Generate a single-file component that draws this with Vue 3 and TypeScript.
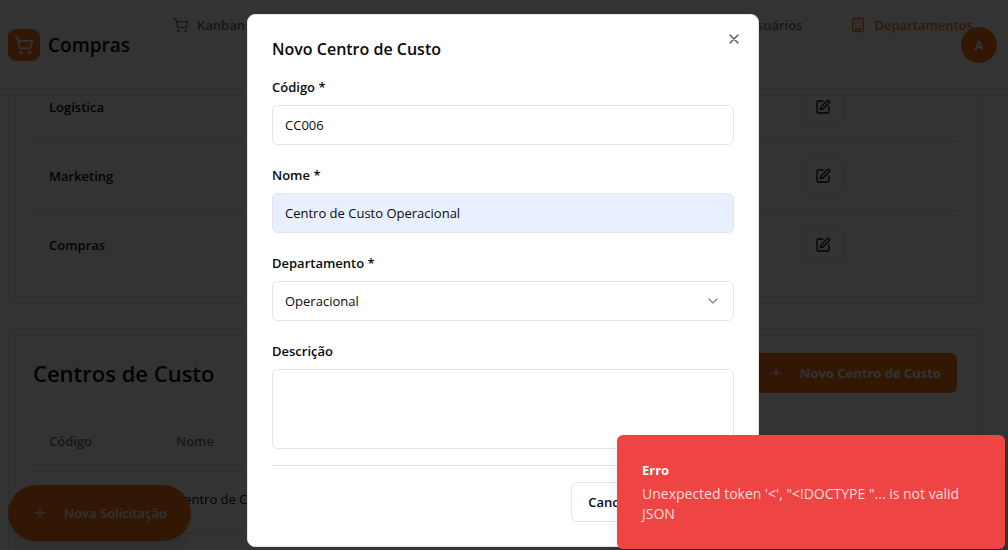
<script setup lang="ts">
import { ref } from 'vue'

interface CostCenter {
  code: string
  name: string
}

const departments = ref<string[]>(['Logística', 'Marketing', 'Compras'])
const costCenters = ref<CostCenter[]>([
  { code: '', name: 'Centro de Custo' },
  { code: '', name: '' },
])
const form = ref({ code: 'CC006', name: 'Centro de Custo Operacional', department: 'Operacional', description: '' })
</script>

<template>
  <div class="page">
    <header class="topbar">
      <a class="brand" href="#">
        <span class="brand-mark">
          <svg width="20" height="20" viewBox="0 0 24 24" class="icon"><circle cx="8" cy="21" r="1" /><circle cx="19" cy="21" r="1" /><path d="M2.05 2.05h2l2.66 12.42a2 2 0 0 0 2 1.58h9.78a2 2 0 0 0 1.95-1.57l1.65-7.43H5.12" /></svg>
        </span>
        <span class="brand-name">Compras</span>
      </a>
      <nav class="nav">
        <a class="nav-link" href="#">
          <svg width="16" height="16" viewBox="0 0 24 24" class="icon"><circle cx="8" cy="21" r="1" /><circle cx="19" cy="21" r="1" /><path d="M2.05 2.05h2l2.66 12.42a2 2 0 0 0 2 1.58h9.78a2 2 0 0 0 1.95-1.57l1.65-7.43H5.12" /></svg>
          Kanban
        </a>
        <a class="nav-link push" href="#">Usuários</a>
        <a class="nav-link active" href="#">
          <svg width="16" height="16" viewBox="0 0 24 24" class="icon"><rect x="4" y="2" width="16" height="20" rx="2" /><path d="M9 22v-4h6v4M8 6h.01M16 6h.01M12 6h.01M12 10h.01M12 14h.01M16 10h.01M16 14h.01M8 10h.01M8 14h.01" /></svg>
          Departamentos
        </a>
      </nav>
      <button class="avatar" type="button" aria-label="Conta">A</button>
    </header>

    <main class="content">
      <section class="card departments">
        <table class="table">
          <tbody>
            <tr v-for="d in departments" :key="d">
              <td class="strong">{{ d }}</td>
              <td class="actions">
                <button class="edit" type="button" :aria-label="'Editar ' + d">
                  <svg width="16" height="16" viewBox="0 0 24 24" class="icon"><path d="M12 3H5a2 2 0 0 0-2 2v14a2 2 0 0 0 2 2h14a2 2 0 0 0 2-2v-7" /><path d="M18.375 2.625a2.121 2.121 0 1 1 3 3L12 15l-4 1 1-4Z" /></svg>
                </button>
              </td>
            </tr>
          </tbody>
        </table>
      </section>

      <section class="card">
        <div class="card-head">
          <h2>Centros de Custo</h2>
          <button class="primary" type="button">
            <svg width="16" height="16" viewBox="0 0 24 24" class="icon"><path d="M5 12h14M12 5v14" /></svg>
            Novo Centro de Custo
          </button>
        </div>
        <table class="table">
          <thead>
            <tr><th class="code">Código</th><th>Nome</th></tr>
          </thead>
          <tbody>
            <tr v-for="(c, i) in costCenters" :key="i">
              <td>{{ c.code }}</td>
              <td>{{ c.name }}</td>
            </tr>
          </tbody>
        </table>
      </section>
    </main>

    <button class="primary fab" type="button">
      <svg width="16" height="16" viewBox="0 0 24 24" class="icon"><path d="M5 12h14M12 5v14" /></svg>
      Nova Solicitação
    </button>

    <div class="overlay">
      <form class="dialog" role="dialog" aria-labelledby="dialog-title" @submit.prevent>
        <h2 id="dialog-title">Novo Centro de Custo</h2>
        <button class="close" type="button" aria-label="Fechar">
          <svg width="16" height="16" viewBox="0 0 24 24" class="icon"><path d="M18 6 6 18M6 6l12 12" /></svg>
        </button>
        <div class="fields">
          <div class="field">
            <label for="code">Código *</label>
            <input id="code" v-model="form.code" type="text" />
          </div>
          <div class="field">
            <label for="name">Nome *</label>
            <input id="name" v-model="form.name" class="autofilled" type="text" />
          </div>
          <div class="field">
            <label for="department">Departamento *</label>
            <div class="select">
              <select id="department" v-model="form.department">
                <option>Operacional</option>
                <option v-for="d in departments" :key="d">{{ d }}</option>
              </select>
              <svg width="16" height="16" viewBox="0 0 24 24" class="icon chevron"><path d="m6 9 6 6 6-6" /></svg>
            </div>
          </div>
          <div class="field">
            <label for="description">Descrição</label>
            <textarea id="description" v-model="form.description"></textarea>
          </div>
        </div>
        <div class="dialog-actions">
          <button class="secondary" type="button">Cancelar</button>
          <button class="primary" type="submit">Criar</button>
        </div>
      </form>
    </div>

    <div class="toast" role="alert">
      <strong>Erro</strong>
      <p>Unexpected token '&lt;', "&lt;!DOCTYPE "... is not valid JSON</p>
    </div>
  </div>
</template>

<style>
body {
  margin: 0;
  background: #fff;
}
</style>

<style scoped>
.page,
.page * {
  box-sizing: border-box;
}
.page {
  position: relative;
  height: 100vh;
  overflow: hidden;
  font-family: 'Segoe UI', 'Open Sans', 'Noto Sans', sans-serif;
  font-size: 13px;
  line-height: 20px;
  color: #0a0a0a;
}
button,
input,
select,
textarea {
  font: inherit;
  color: inherit;
}
h2,
p {
  margin: 0;
}
a {
  text-decoration: none;
}
.icon {
  flex: none;
  fill: none;
  stroke: currentColor;
  stroke-width: 2;
  stroke-linecap: round;
  stroke-linejoin: round;
}

.topbar {
  position: relative;
  z-index: 1;
  display: flex;
  align-items: center;
  height: 96px;
  padding: 0 11px 6px 8px;
  background: #fff;
  border-bottom: 1px solid #e5e5e5;
}
.brand {
  display: flex;
  align-items: center;
  gap: 8px;
  width: 165px;
  color: inherit;
}
.brand-mark {
  display: grid;
  place-items: center;
  width: 32px;
  height: 32px;
  border-radius: 8px;
  background: #f97316;
  color: #fff;
}
.brand-name {
  font-size: 19px;
  line-height: 28px;
  font-weight: 600;
}
.nav {
  display: flex;
  flex: 1;
  align-self: flex-start;
  gap: 48px;
  padding-top: 15px;
}
.nav-link {
  display: flex;
  align-items: center;
  gap: 8px;
  font-weight: 600;
  color: #737373;
}
.nav-link.active {
  color: #f97316;
}
.push {
  margin-left: auto;
}
.avatar {
  width: 36px;
  height: 36px;
  margin-left: -12px;
  padding: 0;
  border: 0;
  border-radius: 50%;
  background: #f97316;
  color: #fff;
  font-weight: 700;
}

.content {
  display: flex;
  flex-direction: column;
  gap: 24px;
  margin-top: -24px;
  padding: 0 26px 0 8px;
}
.card {
  padding: 24px;
  border: 1px solid #e5e5e5;
  border-radius: 8px;
}
.departments {
  padding-top: 0;
}
.card-head {
  display: flex;
  align-items: center;
  justify-content: space-between;
  margin-bottom: 24px;
}
.card-head h2 {
  font-size: 22px;
  line-height: 32px;
  font-weight: 600;
}
.table {
  width: 100%;
  border-collapse: separate;
  border-spacing: 0;
}
.table th {
  height: 48px;
  padding: 0 16px;
  border-bottom: 1px solid #e5e5e5;
  text-align: left;
  font-weight: 600;
  color: #737373;
}
.table td {
  height: 69px;
  padding: 16px;
  border-bottom: 1px solid #e5e5e5;
}
.table tr:last-child td {
  height: 68px;
  border-bottom: 0;
}
.table .code {
  width: 127px;
}
.table .strong {
  font-weight: 600;
}
.table .actions {
  width: 171px;
}
.edit {
  display: grid;
  place-items: center;
  width: 42px;
  height: 36px;
  padding: 0;
  border: 1px solid #e5e5e5;
  border-radius: 6px;
  background: #fff;
}
.primary {
  display: flex;
  align-items: center;
  gap: 16px;
  height: 40px;
  padding: 0 16px;
  border: 0;
  border-radius: 6px;
  background: #f97316;
  color: #fafafa;
  font-weight: 700;
}
.fab {
  position: absolute;
  left: 8px;
  bottom: 9px;
  height: 56px;
  padding: 0 24px;
  border-radius: 28px;
  font-weight: 600;
  box-shadow: 0 10px 15px -3px rgb(0 0 0 / 10%), 0 4px 6px -4px rgb(0 0 0 / 10%);
}

.overlay {
  position: absolute;
  inset: 0;
  z-index: 2;
  display: flex;
  align-items: center;
  justify-content: center;
  padding: 10px 2px 0 0;
  background: rgb(0 0 0 / 80%);
}
.dialog {
  position: relative;
  display: flex;
  flex-direction: column;
  gap: 16px;
  width: 100%;
  max-width: 512px;
  padding: 24px;
  border: 1px solid #e5e5e5;
  border-radius: 8px;
  background: #fff;
}
.dialog h2 {
  padding-bottom: 2px;
  font-size: 16px;
  line-height: 20px;
  font-weight: 600;
}
.close {
  position: absolute;
  top: 16px;
  right: 16px;
  display: grid;
  padding: 0;
  border: 0;
  background: none;
  color: #525252;
}
.fields {
  display: grid;
  gap: 20px;
}
.field {
  display: grid;
  gap: 8px;
}
.field label {
  font-weight: 600;
}
.field input,
.field select,
.field textarea {
  width: 100%;
  height: 40px;
  padding: 0 12px;
  border: 1px solid #e5e5e5;
  border-radius: 6px;
  outline: 0;
  background: #fff;
}
.field .autofilled {
  background: #e8f0fe;
}
.field textarea {
  display: block;
  height: 80px;
  padding: 8px 12px;
  resize: none;
}
.select {
  display: grid;
  align-items: center;
}
.select > * {
  grid-area: 1 / 1;
}
.field select {
  appearance: none;
}
.chevron {
  justify-self: end;
  margin-right: 13px;
  color: #8a8a8a;
  pointer-events: none;
}
.dialog-actions {
  display: flex;
  justify-content: flex-end;
  gap: 10px;
  padding-top: 16px;
  border-top: 1px solid #e5e5e5;
}
.secondary {
  height: 40px;
  padding: 0 16px;
  border: 1px solid #e5e5e5;
  border-radius: 6px;
  background: #fff;
  font-weight: 600;
}

.toast {
  position: absolute;
  z-index: 3;
  right: 3px;
  bottom: 1px;
  width: 388px;
  padding: 25px;
  border-radius: 6px;
  background: #ef4444;
  color: #fafafa;
  box-shadow: 0 10px 15px -3px rgb(0 0 0 / 10%), 0 4px 6px -4px rgb(0 0 0 / 10%);
}
.toast strong {
  display: block;
  font-weight: 700;
}
.toast p {
  margin-top: 4px;
  font-size: 14px;
  color: #fcdcdc;
}
</style>
